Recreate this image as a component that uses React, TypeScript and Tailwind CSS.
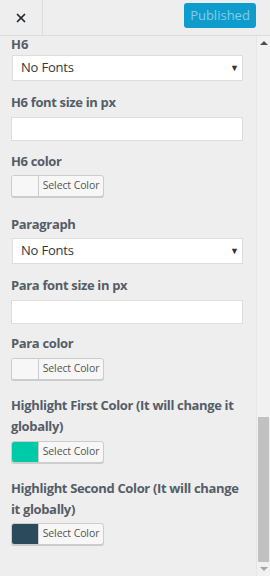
import { X } from 'lucide-react';

const font = { fontFamily: '"Open Sans", "Noto Sans", sans-serif' };

const Label = ({ children, className = '' }: { children: React.ReactNode; className?: string }) => (
  <div className={`text-[13px] font-bold leading-[21px] tracking-[-0.35px] text-[#555d66] whitespace-nowrap ${className}`}>{children}</div>
);

const FontSelect = ({ className = '' }: { className?: string }) => (
  <div className={`flex items-center justify-between h-[26px] w-[231px] ml-[12px] bg-white border border-[#ddd] pl-[8px] pr-[3px] ${className}`}>
    <span className="text-[13px] tracking-[-0.2px] text-[#32373c]">No Fonts</span>
    <span className="text-[9px] text-[#333]">▼</span>
  </div>
);

const TextInput = ({ className = '' }: { className?: string }) => (
  <div className={`h-[24px] w-[232px] ml-[11px] bg-white border border-[#ddd] ${className}`} />
);

const ColorButton = ({ color, className = '' }: { color: string; className?: string }) => (
  <div
    className={`flex h-[22px] w-[93px] ml-[11px] rounded-[3px] border border-[#ccc] bg-[#f7f7f7] shadow-[0_1px_0_#ccc] overflow-hidden ${className}`}
  >
    <div className="w-[27px] h-full border-r border-[#ccc]" style={{ backgroundColor: color }} />
    <div className="flex-1 flex items-center justify-center text-[10.5px] tracking-[-0.1px] text-[#555]">Select Color</div>
  </div>
);

export default function App() {
  return (
    <div className="w-[270px] h-[576px] bg-[#eee] flex flex-col" style={font}>
      <div className="flex h-[36px] border-b border-[#ddd] shrink-0">
        <div className="w-[43px] flex items-center justify-center border-r border-[#ddd]">
          <X className="w-[14px] h-[14px] text-[#23282d]" strokeWidth={3} />
        </div>
        <div className="flex-1 flex justify-end pt-[3px] pr-[14px]">
          <div className="w-[72px] h-[25px] rounded-[3px] bg-[#0e9ccd] text-[#86cce5] text-[13px] flex items-center justify-center">
            Published
          </div>
        </div>
      </div>
      <div className="flex flex-1">
        <div className="flex-1">
          <div className="pl-[11px] pt-[1px]">
            <div className="text-[13px] font-bold leading-[14px] text-[#555d66]">H6</div>
          </div>
          <FontSelect className="mt-[4px]" />
          <div className="pl-[11px] mt-[11px]"><Label>H6 font size in px</Label></div>
          <TextInput className="mt-[4px]" />
          <div className="pl-[11px] mt-[10px]"><Label>H6 color</Label></div>
          <ColorButton color="#f7f7f7" className="mt-[3px]" />
          <div className="pl-[11px] mt-[17px]"><Label>Paragraph</Label></div>
          <FontSelect className="mt-[3px]" />
          <div className="pl-[11px] mt-[11px]"><Label>Para font size in px</Label></div>
          <TextInput className="mt-[4px]" />
          <div className="pl-[11px] mt-[9px]"><Label>Para color</Label></div>
          <ColorButton color="#f7f7f7" className="mt-[4px]" />
          <div className="pl-[11px] mt-[15px]">
            <Label>Highlight First Color (It will change it<br />globally)</Label>
          </div>
          <ColorButton color="#00cba9" className="mt-[4px]" />
          <div className="pl-[11px] mt-[15px]">
            <Label>Highlight Second Color (It will change<br />it globally)</Label>
          </div>
          <ColorButton color="#2b4a5b" className="mt-[3px]" />
        </div>
        <div className="w-[14px] flex flex-col items-center bg-[#f1f1f1] border-l border-[#e6e6e6]">
          <div className="h-[14px] flex items-center justify-center">
            <div className="w-0 h-0 border-l-[4px] border-r-[4px] border-b-[4px] border-l-transparent border-r-transparent border-b-[#505050]" />
          </div>
          <div className="flex-1 w-full flex flex-col">
            <div className="flex-1" />
            <div className="h-[145px] mx-[1px] bg-[#c1c1c1]" />
          </div>
          <div className="h-[14px] flex items-center justify-center">
            <div className="w-0 h-0 border-l-[4px] border-r-[4px] border-t-[4px] border-l-transparent border-r-transparent border-t-[#a3a3a3]" />
          </div>
        </div>
      </div>
    </div>
  );
}
